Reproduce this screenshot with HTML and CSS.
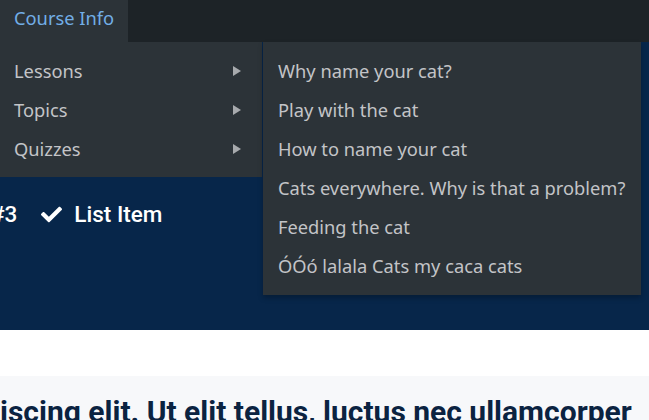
FILE: index.html
```html
<!DOCTYPE html>
<html>
<head>
<meta charset="utf-8">
<link rel="stylesheet" href="styles.css">
</head>
<body>
<div class="adminbar">
  <div class="tab">
    <span class="tab-label">Course Info</span>
    <div class="dropdown">
      <ul class="menu">
        <li class="menu-item">Lessons<span class="arrow"></span></li>
        <li class="menu-item">Topics<span class="arrow"></span></li>
        <li class="menu-item">Quizzes<span class="arrow"></span></li>
      </ul>
      <ul class="submenu">
        <li class="sub-item">Why name your cat?</li>
        <li class="sub-item">Play with the cat</li>
        <li class="sub-item">How to name your cat</li>
        <li class="sub-item">Cats everywhere. Why is that a problem?</li>
        <li class="sub-item">Feeding the cat</li>
        <li class="sub-item">ÓÓó lalala Cats my caca cats</li>
      </ul>
    </div>
  </div>
</div>
<section class="hero">
  <div class="list">
    <span class="num">#3</span>
    <span class="item">
      <svg class="check" viewBox="0 0 512 512" width="21" height="21"><path fill="#fff" d="M173.9 439.4 7.5 273c-10-10-10-26.2 0-36.2l36.2-36.2c10-10 26.2-10 36.2 0L192 312.7 432.1 72.6c10-10 26.2-10 36.2 0l36.2 36.2c10 10 10 26.2 0 36.2L210.1 439.4c-10 10-26.2 10-36.2 0z"/></svg>
      List Item
    </span>
  </div>
</section>
<div class="spacer"></div>
<section class="content">
  <h2 class="heading">iscing elit. Ut elit tellus, luctus nec ullamcorper</h2>
</section>
</body>
</html>
```
FILE: styles.css
```css
html, body {
  margin: 0;
  padding: 0;
  background: #ffffff;
  overflow: hidden;
  height: 420px;
}
.adminbar {
  height: 42px;
  background: #1d2327;
  display: flex;
  position: relative;
  z-index: 10;
  font-family: "Noto Sans", "Open Sans", sans-serif;
}
.tab {
  position: relative;
  width: 128px;
  height: 42px;
  background: #2c3338;
  display: flex;
  align-items: center;
}
.tab-label {
  color: #72aee6;
  font-size: 18.3px;
  padding-left: 14px;
  line-height: 1;
  margin-top: -6px;
}
.dropdown {
  position: absolute;
  top: 42px;
  left: 0;
  display: flex;
  align-items: flex-start;
}
ul {
  list-style: none;
  margin: 0;
}
.menu {
  width: 262px;
  box-sizing: border-box;
  background: #2c3338;
  padding: 9px 0 9px;
}
.submenu {
  width: 378px;
  box-sizing: border-box;
  margin-left: 1px;
  background: #2c3338;
  padding: 9px 0 10px;
  box-shadow: 0 3px 5px rgba(0, 0, 0, 0.25);
}
.menu-item, .sub-item {
  height: 39px;
  display: flex;
  align-items: center;
  color: #c3c4c7;
  font-size: 18.3px;
}
.menu-item {
  padding: 0 0 0 14px;
  justify-content: space-between;
  padding-right: 21px;
}
.sub-item {
  padding-left: 15px;
}
.arrow {
  width: 0;
  height: 0;
  border-top: 5px solid transparent;
  border-bottom: 5px solid transparent;
  border-left: 8px solid #a7aaad;
}
.hero {
  background: #07264a;
  height: 288px;
  box-sizing: border-box;
  padding-top: 159px;
  font-family: Roboto, "Liberation Sans", sans-serif;
}
.list {
  display: flex;
  align-items: center;
  gap: 24px;
  color: #ffffff;
  font-size: 22.5px;
  font-weight: 500;
  margin-left: -9px;
}
.item {
  display: flex;
  align-items: center;
  gap: 12px;
}
.spacer {
  height: 46px;
  background: #fff;
}
.content {
  background: #f7f8fa;
  height: 100px;
  padding-top: 18px;
  box-sizing: border-box;
}
.heading {
  margin: 0;
  font-family: Roboto, "Liberation Sans", sans-serif;
  font-weight: 700;
  font-size: 30px;
  line-height: 36px;
  color: #0b2341;
  white-space: nowrap;
}
```
